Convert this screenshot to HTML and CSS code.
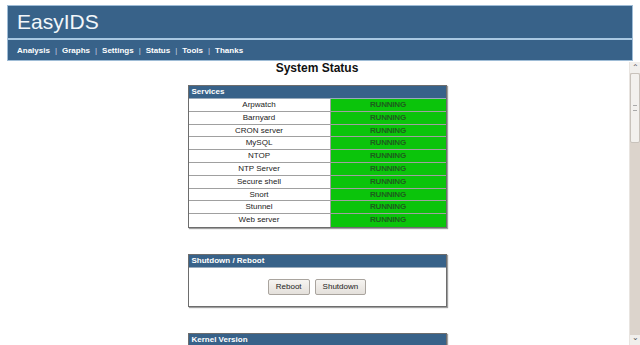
FILE: index.html
```html
<!DOCTYPE html>
<html>
<head>
<meta charset="utf-8">
<link rel="stylesheet" href="styles.css">
</head>
<body>
<div class="header">
  <div class="title">EasyIDS</div>
  <div class="nav">
    <span>Analysis</span><i>|</i><span>Graphs</span><i>|</i><span>Settings</span><i>|</i><span>Status</span><i>|</i><span>Tools</span><i>|</i><span>Thanks</span>
  </div>
</div>
<div class="frame">
  <div class="content">
    <h1>System Status</h1>
    <div class="box">
      <div class="box-head">Services</div>
      <div class="row"><div class="name">Arpwatch</div><div class="state">RUNNING</div></div>
      <div class="row"><div class="name">Barnyard</div><div class="state">RUNNING</div></div>
      <div class="row"><div class="name">CRON server</div><div class="state">RUNNING</div></div>
      <div class="row"><div class="name">MySQL</div><div class="state">RUNNING</div></div>
      <div class="row"><div class="name">NTOP</div><div class="state">RUNNING</div></div>
      <div class="row"><div class="name">NTP Server</div><div class="state">RUNNING</div></div>
      <div class="row"><div class="name">Secure shell</div><div class="state">RUNNING</div></div>
      <div class="row"><div class="name">Snort</div><div class="state">RUNNING</div></div>
      <div class="row"><div class="name">Stunnel</div><div class="state">RUNNING</div></div>
      <div class="row last"><div class="name">Web server</div><div class="state">RUNNING</div></div>
    </div>
    <div class="box">
      <div class="box-head">Shutdown / Reboot</div>
      <div class="buttons"><button class="btn">Reboot</button><button class="btn">Shutdown</button></div>
    </div>
    <div class="box">
      <div class="box-head">Kernel Version</div>
      <div class="buttons"></div>
    </div>
  </div>
  <div class="scrollbar">
    <div class="arrow">&#8963;</div>
    <div class="thumb"><span class="grip"></span></div>
    <div class="track"></div>
    <div class="arrow down">&#8964;</div>
  </div>
</div>
</body>
</html>
```
FILE: styles.css
```css
html, body {
  margin: 0;
  padding: 0;
  background: #ffffff;
  font-family: "Liberation Sans", Arial, sans-serif;
  width: 640px;
  height: 345px;
  overflow: hidden;
}
.header {
  margin: 5px 7px 0 7px;
  background: #386289;
  border: 1px solid #9fbcd6;
  box-sizing: border-box;
  height: 56px;
  display: flex;
  flex-direction: column;
}
.title {
  height: 32px;
  color: #f2f6fa;
  font-size: 21px;
  line-height: 32px;
  padding-left: 9px;
  border-bottom: 2px solid #a9c8e2;
}
.nav {
  flex: 1;
  display: flex;
  align-items: center;
  padding-left: 9px;
  color: #ffffff;
  font-size: 8px;
  font-weight: bold;
}
.nav i {
  font-style: normal;
  font-weight: normal;
  color: #c6d4e2;
  padding: 0 5px;
}
.frame {
  display: flex;
  height: 284px;
  margin-top: 1px;
}
.content {
  width: 623px;
  padding-left: 6px;
  overflow: hidden;
}
h1 {
  margin: 0;
  padding-top: 0;
  text-align: center;
  font-size: 12px;
  line-height: 13px;
  height: 23px;
  color: #111;
}
.box {
  width: 259px;
  margin: 0 auto 26px auto;
  border: 1px solid #6d6d6d;
  box-shadow: 1px 1px 1px #a0a0a0;
  box-sizing: border-box;
  background: #fff;
}
.box-head {
  background: #386289;
  color: #ffffff;
  font-size: 8px;
  font-weight: bold;
  height: 12px;
  line-height: 12px;
  padding-left: 3px;
  border-bottom: 1px solid #9ab;
}
.row {
  display: flex;
  height: 12.8px;
  border-bottom: 1px solid #a0a0a0;
  box-sizing: border-box;
  font-size: 8px;
  line-height: 12px;
}
.row.last {
  border-bottom: none;
}
.name {
  width: 141px;
  text-align: center;
  color: #222;
  border-right: 1px solid #a0a0a0;
}
.state {
  flex: 1;
  text-align: center;
  background: #0bc40b;
  color: #1d5f1d;
  font-weight: bold;
  letter-spacing: -0.2px;
}
.buttons {
  height: 38px;
  display: flex;
  justify-content: center;
  align-items: center;
  gap: 5px;
}
.btn {
  font-family: "Liberation Sans", Arial, sans-serif;
  font-size: 8px;
  height: 16px;
  padding: 0 7px;
  margin: 0;
  border: 1px solid #a9a49e;
  border-radius: 2px;
  background: linear-gradient(#f6f4f1, #e4e0db);
  color: #222;
}
.scrollbar {
  width: 10px;
  margin-left: 1px;
  background: #dcd4cc;
  border-left: 1px solid #e8e4e0;
  display: flex;
  flex-direction: column;
}
.arrow {
  height: 11px;
  background: #f1efec;
  font-size: 8px;
  line-height: 11px;
  text-align: center;
  color: #555;
}
.arrow.down {
  line-height: 6px;
}
.thumb {
  height: 68px;
  background: #f3f1ee;
  border: 1px solid #c8c2bb;
  border-radius: 2px;
  display: flex;
  align-items: center;
  justify-content: center;
}
.grip {
  width: 4px;
  height: 4px;
  border-top: 1px solid #aaa;
  border-bottom: 1px solid #aaa;
}
.track {
  flex: 1;
}
```
